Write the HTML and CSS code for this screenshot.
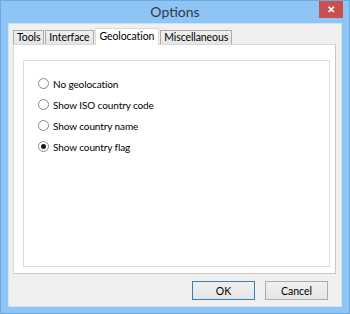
FILE: index.html
```html
<!DOCTYPE html>
<html lang="en">
<head>
    <meta charset="UTF-8">
    <title>Options</title>
    <link rel="stylesheet" href="styles.css">
</head>
<body>
    <div class="window">
        <div class="titlebar">
            <span class="title">Options</span>
            <button class="close-button">&#x2715;</button>
        </div>
        <div class="client">
            <div class="tabs">
                <div class="tab">Tools</div>
                <div class="tab">Interface</div>
                <div class="tab active">Geolocation</div>
                <div class="tab">Miscellaneous</div>
            </div>
            <div class="tab-panel">
                <div class="group">
                    <label class="option"><span class="radio"></span>No geolocation</label>
                    <label class="option"><span class="radio"></span>Show ISO country code</label>
                    <label class="option"><span class="radio"></span>Show country name</label>
                    <label class="option"><span class="radio checked"></span>Show country flag</label>
                </div>
            </div>
            <div class="actions">
                <button class="btn default">OK</button>
                <button class="btn">Cancel</button>
            </div>
        </div>
    </div>
</body>
</html>
```
FILE: styles.css
```css
* {
    margin: 0;
    padding: 0;
    box-sizing: border-box;
}
body {
    width: 350px;
    height: 314px;
    font-family: 'Lato', 'Noto Sans', sans-serif;
    font-size: 10px;
    letter-spacing: -0.1px;
    color: #000;
    overflow: hidden;
}
.window {
    width: 350px;
    height: 314px;
    background-color: #8ec5f5;
    border: 1px solid #6fa9dc;
    padding: 0 7px 6px 7px;
    display: flex;
    flex-direction: column;
}
.titlebar {
    height: 24px;
    position: relative;
    display: flex;
    justify-content: center;
    align-items: center;
}
.title {
    font-size: 14px;
    letter-spacing: 0;
    color: #2b3a4a;
    margin-top: -1px;
}
.close-button {
    position: absolute;
    top: 0;
    right: -1px;
    width: 24px;
    height: 17px;
    background-color: #c75050;
    color: #fff;
    border: none;
    font-size: 10px;
    font-weight: bold;
    line-height: 17px;
}
.client {
    flex: 1;
    background-color: #f0f0f0;
    border: 1px solid #cfe3f6;
    padding: 3px 5px 6px 4px;
    display: flex;
    flex-direction: column;
}
.tabs {
    display: flex;
    align-items: flex-end;
    height: 17px;
    position: relative;
    z-index: 1;
}
.tab {
    height: 14px;
    padding: 0 3px;
    line-height: 13px;
    font-size: 10.5px;
    border: 1px solid #acacac;
    border-bottom: none;
    margin-right: 1px;
    background: linear-gradient(#f0f0f0, #e5e5e5);
}
.tab.active {
    height: 17px;
    line-height: 15px;
    background: #fff;
    border-color: #d9d9d9;
    padding: 0 4px;
    margin-bottom: -1px;
}
.tab-panel {
    height: 230px;
    background-color: #fff;
    border: 1px solid #d9d9d9;
    border-right-color: #c8c8c8;
    border-bottom-color: #c8c8c8;
    padding: 15px 5px 6px 9px;
}
.group {
    height: 100%;
    border: 1px solid #dcdcdc;
    padding: 12px 0 0 14px;
    display: flex;
    flex-direction: column;
}
.option {
    height: 21px;
    display: flex;
    align-items: center;
    gap: 4px;
    color: #000;
}
.radio {
    width: 11px;
    height: 11px;
    border: 1px solid #8a8a8a;
    border-radius: 50%;
    background: #fff;
    display: flex;
    justify-content: center;
    align-items: center;
}
.radio.checked::after {
    content: '';
    width: 5px;
    height: 5px;
    border-radius: 50%;
    background: #1a1a1a;
}
.actions {
    display: flex;
    justify-content: flex-end;
    gap: 10px;
    margin-top: 7px;
    margin-right: 8px;
}
.btn {
    width: 63px;
    height: 19px;
    font-family: inherit;
    font-size: 10.5px;
    background: linear-gradient(#f0f0f0, #e5e5e5);
    border: 1px solid #acacac;
    color: #000;
}
.btn.default {
    border-color: #3c7fb1;
}
```
